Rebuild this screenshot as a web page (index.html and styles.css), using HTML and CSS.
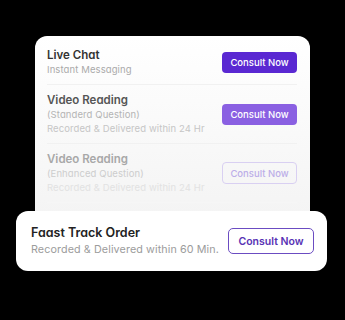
FILE: index.html
```html
<!DOCTYPE html>
<html lang="en">
<head>
    <meta charset="UTF-8">
    <meta name="viewport" content="width=device-width, initial-scale=1.0">
    <title>Consult Options</title>
    <link rel="stylesheet" href="styles.css">
</head>
<body>
    <div class="stage">
        <div class="list-card">
            <div class="row row-1">
                <div class="info">
                    <div class="title">Live Chat</div>
                    <div class="sub">Instant Messaging</div>
                </div>
                <button class="btn btn-solid">Consult Now</button>
            </div>
            <div class="row row-2">
                <div class="info">
                    <div class="title">Video Reading</div>
                    <div class="sub">(Standerd Question)</div>
                    <div class="sub sub-2">Recorded &amp; Delivered within 24 Hr</div>
                </div>
                <button class="btn btn-soft">Consult Now</button>
            </div>
            <div class="row row-3">
                <div class="info">
                    <div class="title">Video Reading</div>
                    <div class="sub">(Enhanced Question)</div>
                    <div class="sub sub-2">Recorded &amp; Delivered within 24 Hr</div>
                </div>
                <button class="btn btn-ghost">Consult Now</button>
            </div>
        </div>
        <div class="feature-card">
            <div class="info">
                <div class="title">Faast Track Order</div>
                <div class="sub">Recorded &amp; Delivered within 60 Min.</div>
            </div>
            <button class="btn btn-outline">Consult Now</button>
        </div>
    </div>
</body>
</html>
```

FILE: styles.css
```css
body {
    margin: 0;
    background: #000;
    font-family: Inter, "Noto Sans", sans-serif;
    font-feature-settings: "cv11";
}
.stage {
    padding-top: 36px;
}
.list-card {
    width: 250px;
    height: 190px;
    margin-left: 35px;
    padding: 4px 13px 0 12px;
    background: linear-gradient(#fff, #f3f3f3);
    border-radius: 12px 12px 0 0;
    overflow: hidden;
}
.row {
    display: flex;
    align-items: center;
    justify-content: space-between;
    padding: 7px 0;
    border-bottom: 1px solid #f1f1f1;
}
.title {
    font-size: 11.5px;
    line-height: 16px;
    font-weight: 600;
    color: #333;
}
.sub {
    font-size: 9.5px;
    line-height: 14px;
    letter-spacing: 0.1px;
    color: #aaa;
}
.btn {
    width: 75px;
    height: 21px;
    padding: 0;
    border-radius: 4px;
    font-family: inherit;
    font-feature-settings: "cv11";
    font-size: 9.5px;
    font-weight: 500;
    border: none;
    cursor: pointer;
}
.btn-solid {
    background: #5a28d2;
    color: #fff;
}
.btn-soft {
    background: #8a60e2;
    color: #fff;
}
.btn-ghost {
    height: 22px;
    background: transparent;
    border: 1px solid #d9d0f2;
    color: #bcaee8;
}
.row-2 .title { color: #555; }
.row-2 .sub { color: #b4b4b4; }
.row-2 .sub-2 { color: #c6c6c6; }
.row-3 .title { color: #a8a8a8; }
.row-3 .sub { color: #cdcdcd; }
.row-3 .sub-2 { color: #e2e2e2; }
.row-3 { border-bottom-color: #f6f6f6; }
.feature-card {
    position: relative;
    display: flex;
    align-items: center;
    justify-content: space-between;
    width: 283px;
    margin: -19px 0 0 16px;
    padding: 13px 13px 13px 15px;
    background: #fff;
    border-radius: 12px;
}
.feature-card .title {
    font-size: 12.5px;
    line-height: 18px;
    color: #222;
}
.feature-card .sub {
    font-size: 10.75px;
    line-height: 16px;
    color: #9c9c9c;
}
.btn-outline {
    width: 86px;
    height: 26px;
    background: #fff;
    border: 1.5px solid #6b4cc2;
    border-radius: 5px;
    color: #5832b4;
    font-size: 10.5px;
    font-weight: 600;
}
```
